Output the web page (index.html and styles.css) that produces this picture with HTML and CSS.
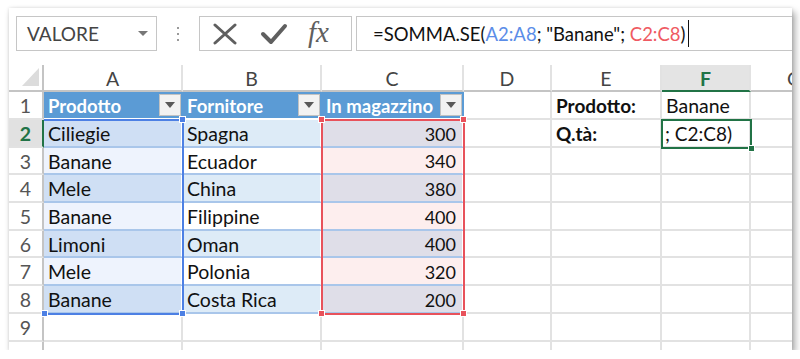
FILE: index.html
```html
<!DOCTYPE html>
<html lang="it">
<head>
    <meta charset="UTF-8">
    <meta name="viewport" content="width=device-width, initial-scale=1.0">
    <title>SOMMA.SE</title>
    <link rel="stylesheet" href="styles.css">
</head>
<body>
    <div class="window">
        <!-- formula bar -->
        <div class="formula-bar">
            <div class="name-box">
                <span>VALORE</span>
                <span class="name-caret"></span>
            </div>
            <div class="grip"><i></i><i></i><i></i></div>
            <div class="fx-buttons">
                <svg class="icon" width="26" height="22" viewBox="0 0 26 22">
                    <path d="M3 2 L23 20 M23 2 L3 20" stroke="#5f5f5f" stroke-width="3" stroke-linecap="round" fill="none"/>
                </svg>
                <svg class="icon" width="28" height="22" viewBox="0 0 28 22">
                    <path d="M3 11 L11 19 L25 3" stroke="#5f5f5f" stroke-width="4" stroke-linecap="round" stroke-linejoin="round" fill="none"/>
                </svg>
                <span class="fx">fx</span>
            </div>
            <div class="formula-input">
                <span class="formula-text">=SOMMA.SE(<span class="ref-blue">A2:A8</span>; "Banane"; <span class="ref-red">C2:C8</span>)</span><span class="text-cursor"></span>
            </div>
        </div>

        <!-- sheet -->
        <div class="sheet">
            <div class="cell corner"><span class="corner-tri"></span></div>
            <div class="cell ch">A</div>
            <div class="cell ch">B</div>
            <div class="cell ch">C</div>
            <div class="cell ch">D</div>
            <div class="cell ch">E</div>
            <div class="cell ch ch-active">F</div>
            <div class="cell ch">G</div>

            <div class="cell rh">1</div>
            <div class="cell th">Prodotto<span class="filter"></span></div>
            <div class="cell th">Fornitore<span class="filter"></span></div>
            <div class="cell th">In magazzino<span class="filter"></span></div>
            <div class="cell"></div>
            <div class="cell bold">Prodotto:</div>
            <div class="cell">Banane</div>
            <div class="cell"></div>

            <div class="cell rh rh-active">2</div>
            <div class="cell td a-dark">Ciliegie</div>
            <div class="cell td b-dark">Spagna</div>
            <div class="cell td c-dark num">300</div>
            <div class="cell"></div>
            <div class="cell bold">Q.tà:</div>
            <div class="cell editing">; C2:C8)</div>
            <div class="cell"></div>

            <div class="cell rh">3</div>
            <div class="cell td a-light">Banane</div>
            <div class="cell td b-light">Ecuador</div>
            <div class="cell td c-light num">340</div>
            <div class="cell"></div>
            <div class="cell"></div>
            <div class="cell"></div>
            <div class="cell"></div>

            <div class="cell rh">4</div>
            <div class="cell td a-dark">Mele</div>
            <div class="cell td b-dark">China</div>
            <div class="cell td c-dark num">380</div>
            <div class="cell"></div>
            <div class="cell"></div>
            <div class="cell"></div>
            <div class="cell"></div>

            <div class="cell rh">5</div>
            <div class="cell td a-light">Banane</div>
            <div class="cell td b-light">Filippine</div>
            <div class="cell td c-light num">400</div>
            <div class="cell"></div>
            <div class="cell"></div>
            <div class="cell"></div>
            <div class="cell"></div>

            <div class="cell rh">6</div>
            <div class="cell td a-dark">Limoni</div>
            <div class="cell td b-dark">Oman</div>
            <div class="cell td c-dark num">400</div>
            <div class="cell"></div>
            <div class="cell"></div>
            <div class="cell"></div>
            <div class="cell"></div>

            <div class="cell rh">7</div>
            <div class="cell td a-light">Mele</div>
            <div class="cell td b-light">Polonia</div>
            <div class="cell td c-light num">320</div>
            <div class="cell"></div>
            <div class="cell"></div>
            <div class="cell"></div>
            <div class="cell"></div>

            <div class="cell rh">8</div>
            <div class="cell td a-dark">Banane</div>
            <div class="cell td b-dark">Costa Rica</div>
            <div class="cell td c-dark num">200</div>
            <div class="cell"></div>
            <div class="cell"></div>
            <div class="cell"></div>
            <div class="cell"></div>

            <div class="cell rh">9</div>
            <div class="cell"></div>
            <div class="cell"></div>
            <div class="cell"></div>
            <div class="cell"></div>
            <div class="cell"></div>
            <div class="cell"></div>
            <div class="cell"></div>

            <div class="cell rh"></div>
            <div class="cell"></div>
            <div class="cell"></div>
            <div class="cell"></div>
            <div class="cell"></div>
            <div class="cell"></div>
            <div class="cell"></div>
            <div class="cell"></div>

            <!-- formula range highlights and active cell -->
            <div class="range range-blue"></div>
            <div class="handle blue h-b1"></div>
            <div class="handle blue h-b2"></div>
            <div class="handle blue h-b3"></div>
            <div class="range range-red"></div>
            <div class="handle red h-r1"></div>
            <div class="handle red h-r2"></div>
            <div class="handle red h-r3"></div>
            <div class="handle red h-r4"></div>
            <div class="active-cell"></div>
            <div class="handle green h-g"></div>
        </div>
    </div>
</body>
</html>
```

FILE: styles.css
```css
body {
    margin: 0;
    background-color: white;
    font-family: Lato, "Liberation Sans", sans-serif;
    color: #111;
}

.window {
    margin: 8px 0 0 9px;
    width: 783px;
    height: 342px;
    overflow: hidden;
    background-color: white;
    box-shadow: 3px 4px 7px rgba(0, 0, 0, 0.35), 0 0 3px rgba(0, 0, 0, 0.12);
}

/* formula bar */

.formula-bar {
    display: flex;
    align-items: center;
    padding: 8px 0 0 7px;
    height: 35px;
}

.name-box {
    box-sizing: border-box;
    width: 141px;
    height: 35px;
    border: 1px solid #c6c6c6;
    display: flex;
    align-items: center;
    justify-content: space-between;
    padding: 0 8px 0 10px;
    color: #444;
    font-size: 19px;
}

.name-caret {
    width: 0;
    height: 0;
    border-left: 5px solid transparent;
    border-right: 5px solid transparent;
    border-top: 5px solid #777;
}

.grip {
    width: 42px;
    display: flex;
    flex-direction: column;
    align-items: center;
    gap: 4px;
}

.grip i {
    width: 2px;
    height: 2px;
    background-color: #9a9a9a;
}

.fx-buttons {
    box-sizing: border-box;
    width: 153px;
    height: 35px;
    border: 1px solid #c6c6c6;
    display: flex;
    align-items: center;
    padding-left: 12px;
    gap: 22px;
}

.fx {
    font-family: "Liberation Serif", serif;
    font-style: italic;
    font-size: 29px;
    color: #5f5f5f;
    margin-left: -2px;
    margin-top: -3px;
}

.formula-input {
    box-sizing: border-box;
    flex: 1;
    height: 35px;
    margin-left: 4px;
    border: 1px solid #c6c6c6;
    border-right: none;
    display: flex;
    align-items: center;
    padding-left: 16px;
    font-size: 18.5px;
    white-space: nowrap;
    color: #111;
}

.ref-blue {
    color: #5b8de8;
}

.ref-red {
    color: #ef5a62;
}

.text-cursor {
    width: 1px;
    height: 27px;
    margin-left: 2px;
    background-color: #111;
}

/* sheet grid */

.sheet {
    position: relative;
    margin-top: 14px;
    display: grid;
    grid-template-columns: 35px 139px 139px 142px 88px 110px 89px 88px;
    grid-template-rows: 27px 28px 28px 27px 28px 28px 27px 28px 28px 28px 28px;
    font-size: 19.5px;
}

.cell {
    box-sizing: border-box;
    border-right: 2px solid #e2e2e2;
    border-bottom: 2px solid #e2e2e2;
    display: flex;
    align-items: center;
    padding: 1px 4px 0 4px;
    white-space: nowrap;
    overflow: hidden;
}

.corner {
    border-right-color: #c4c4c4;
    border-bottom-color: #c4c4c4;
    align-items: flex-end;
    justify-content: flex-end;
    padding: 0 3px 4px 0;
}

.corner-tri {
    width: 0;
    height: 0;
    border-left: 17px solid transparent;
    border-bottom: 18px solid #dcdcdc;
}

.ch {
    justify-content: center;
    color: #444;
    border-bottom-color: #c4c4c4;
}

.ch-active {
    background-color: #e4e4e4;
    color: #217346;
    font-weight: bold;
    border-bottom-color: #217346;
}

.rh {
    justify-content: center;
    color: #555;
    border-right-color: #c4c4c4;
}

.rh-active {
    background-color: #e1e1e1;
    color: #217346;
    font-weight: bold;
    border-right-color: #217346;
}

.bold {
    font-weight: bold;
    font-size: 19px;
}

.editing {
    padding-left: 3px;
    font-size: 19px;
}

/* table */

.th {
    background-color: #5b9bd5;
    border-right-color: #5b9bd5;
    border-bottom-color: #ffffff;
    color: white;
    font-weight: bold;
    font-size: 18.5px;
    justify-content: space-between;
    padding-right: 0;
}

.filter {
    box-sizing: border-box;
    width: 22px;
    height: 22px;
    margin-top: -1px;
    background-color: #f2f2f2;
    border: 1px solid #c2c2c2;
    display: flex;
    align-items: center;
    justify-content: center;
}

.filter::after {
    content: "";
    border-left: 5px solid transparent;
    border-right: 5px solid transparent;
    border-top: 6px solid #595959;
}

.td {
    border-right-color: #ffffff;
    border-bottom-color: #a9c6ea;
}

.num {
    justify-content: flex-end;
    padding-right: 6px;
    font-size: 18px;
}

.a-dark {
    background-color: #cfdff4;
}

.a-light {
    background-color: #eef3fd;
}

.b-dark {
    background-color: #ddebf7;
}

.b-light {
    background-color: #ffffff;
}

.c-dark {
    background-color: #dfdee8;
}

.c-light {
    background-color: #fdeeee;
}

/* overlays */

.range {
    position: absolute;
    box-sizing: border-box;
    top: 54px;
    height: 196px;
    border: 2px solid;
}

.range-blue {
    left: 35px;
    width: 140px;
    border-color: #4d80e4;
    border-left: none;
}

.range-red {
    left: 312px;
    width: 144px;
    border-color: #e8525b;
}

.active-cell {
    position: absolute;
    box-sizing: border-box;
    left: 652px;
    top: 54px;
    width: 91px;
    height: 30px;
    border: 2px solid #217346;
}

.handle {
    position: absolute;
    box-sizing: border-box;
    width: 7px;
    height: 7px;
    border: 1px solid white;
}

.handle.blue {
    background-color: #4d80e4;
}

.handle.red {
    background-color: #e8525b;
}

.handle.green {
    background-color: #217346;
}

.h-b1 { left: 170px; top: 51px; }
.h-b2 { left: 170px; top: 245px; }
.h-b3 { left: 32px; top: 245px; }
.h-r1 { left: 309px; top: 51px; }
.h-r2 { left: 451px; top: 51px; }
.h-r3 { left: 309px; top: 245px; }
.h-r4 { left: 451px; top: 245px; }
.h-g { left: 739px; top: 80px; }
```
